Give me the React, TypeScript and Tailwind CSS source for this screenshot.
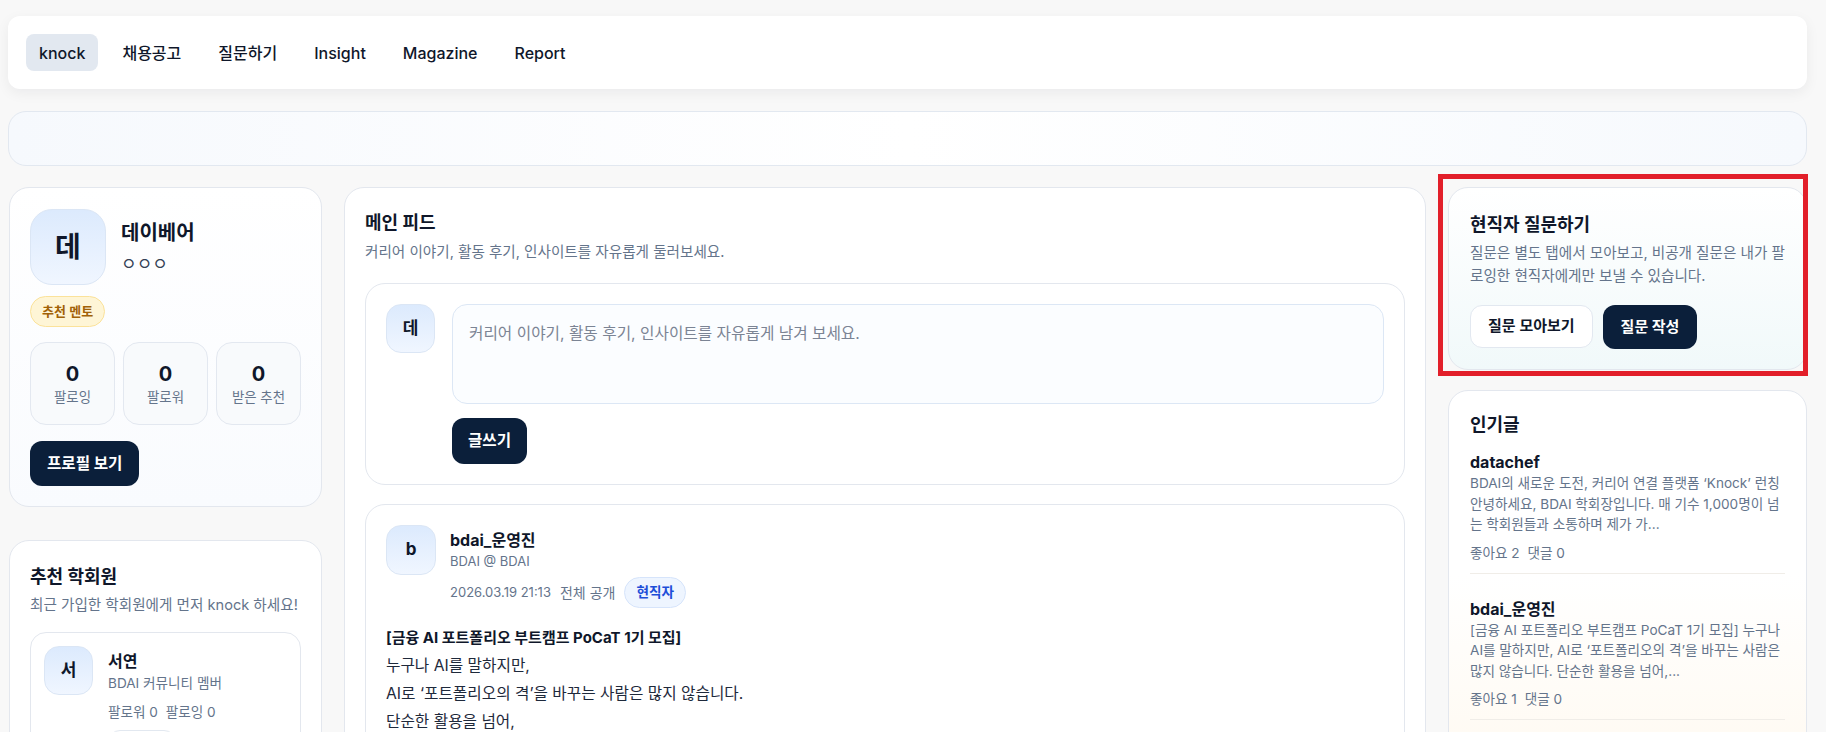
import React from 'react';

const navItems = ['knock', '채용공고', '질문하기', 'Insight', 'Magazine', 'Report'];

const popular = [
  {
    author: 'datachef',
    excerpt:
      'BDAI의 새로운 도전, 커리어 연결 플랫폼 ‘Knock’ 런칭 안녕하세요, BDAI 학회장입니다. 매 기수 1,000명이 넘는 학회원들과 소통하며 제가 가...',
    likes: 2,
    comments: 0,
  },
  {
    author: 'bdai_운영진',
    excerpt:
      '[금융 AI 포트폴리오 부트캠프 PoCaT 1기 모집] 누구나 AI를 말하지만, AI로 ‘포트폴리오의 격’을 바꾸는 사람은 많지 않습니다. 단순한 활용을 넘어,...',
    likes: 1,
    comments: 0,
  },
];

const postLines = [
  '누구나 AI를 말하지만,',
  'AI로 ‘포트폴리오의 격’을 바꾸는 사람은 많지 않습니다.',
  '단순한 활용을 넘어,',
  '실제 금융 데이터로 나만의 포트폴리오를 완성해 보세요.',
];

const Avatar: React.FC<{ letter: string; className?: string }> = ({ letter, className = '' }) => (
  <div
    className={`flex shrink-0 items-center justify-center border border-[#dbe6f5] bg-gradient-to-b from-[#dceafd] to-[#f0f6ff] font-bold text-[#0f172a] ${className}`}
  >
    {letter}
  </div>
);

const ProfileCard = () => (
  <section className="rounded-[20px] border border-[#e3e7ee] bg-gradient-to-b from-white to-[#f9fbfe] p-[20px] pt-[21px]">
    <div className="flex items-start gap-[15px]">
      <Avatar letter="데" className="h-[76px] w-[76px] rounded-[22px] text-[28px]" />
      <div className="pt-[10px]">
        <p className="text-[20px] font-bold leading-[28px] text-[#0f172a]">데이베어</p>
        <p className="mt-[3px] text-[17px] leading-[28px] text-[#334155]">ㅇㅇㅇ</p>
      </div>
    </div>
    <span className="mt-[11px] inline-flex h-[31px] items-center rounded-full border border-[#fbe29a] bg-[#fef5d6] px-[11px] text-[13px] font-semibold text-[#a16207]">
      추천 멘토
    </span>
    <div className="mt-[15px] grid grid-cols-3 gap-[8px]">
      {[
        ['0', '팔로잉'],
        ['0', '팔로워'],
        ['0', '받은 추천'],
      ].map(([n, label]) => (
        <div
          key={label}
          className="flex h-[83px] flex-col items-center justify-center rounded-2xl border border-[#e3e8f0] bg-[#f8fafc]"
        >
          <span className="text-[20px] font-bold leading-[26px] text-[#0f172a]">{n}</span>
          <span className="text-[13.4px] leading-[20px] text-[#64748b]">{label}</span>
        </div>
      ))}
    </div>
    <button className="mt-[16px] h-[45px] rounded-xl bg-[#0b1f3a] px-[17px] text-[15.6px] font-bold text-white">
      프로필 보기
    </button>
  </section>
);

const RecommendCard = () => (
  <section className="mt-[33px] rounded-[20px] border border-[#e3e7ee] bg-white p-[20px] pt-[23px]">
    <h3 className="text-[18px] font-bold leading-[26px] text-[#0f172a]">추천 학회원</h3>
    <p className="mt-[4px] text-[14.6px] leading-[22px] text-[#64748b]">최근 가입한 학회원에게 먼저 knock 하세요!</p>
    <div className="mt-[16px] rounded-2xl border border-[#e3e7ee] bg-white p-[13px]">
      <div className="flex items-start gap-[15px]">
        <Avatar letter="서" className="h-[49px] w-[49px] rounded-[15px] text-[17px]" />
        <div className="pt-[3px]">
          <p className="text-[16px] font-bold leading-[24px] text-[#0f172a]">서연</p>
          <p className="text-[13.6px] leading-[20px] text-[#64748b]">BDAI 커뮤니티 멤버</p>
          <p className="mt-[9px] text-[13.6px] leading-[20px] text-[#64748b]">
            팔로워 0 <span className="ml-[4px]">팔로잉 0</span>
          </p>
          <button className="mt-[8px] h-[36px] rounded-xl border border-[#e2e8f0] bg-white px-[14px] text-[13px] font-semibold text-[#0f172a]">
            knock
          </button>
        </div>
      </div>
    </div>
  </section>
);

const Composer = () => (
  <div className="mt-[20px] rounded-[20px] border border-[#e3e7ee] bg-white p-[20px]">
    <div className="flex items-start gap-[17px]">
      <Avatar letter="데" className="h-[49px] w-[49px] rounded-[15px] text-[17px]" />
      <div className="flex-1">
        <div className="h-[100px] rounded-[15px] border border-[#dce7f5] bg-[#fbfdff] px-[16px] pt-[17px] text-[15.7px] leading-[24px] text-[#7b8494]">
          커리어 이야기, 활동 후기, 인사이트를 자유롭게 남겨 보세요.
        </div>
        <button className="mt-[14px] h-[46px] rounded-xl bg-[#0b1f3a] px-[16px] text-[15.6px] font-bold text-white">
          글쓰기
        </button>
      </div>
    </div>
  </div>
);

const PostCard = () => (
  <article className="mt-[19px] rounded-[20px] border border-[#e3e7ee] bg-white p-[20px]">
    <div className="flex items-start gap-[14px]">
      <Avatar letter="b" className="h-[50px] w-[50px] rounded-[15px] text-[17px]" />
      <div className="pt-[4px]">
        <p className="text-[16px] font-bold leading-[22px] text-[#0f172a]">bdai_운영진</p>
        <p className="text-[13px] leading-[20px] text-[#64748b]">BDAI @ BDAI</p>
        <div className="mt-[6px] flex items-center gap-[9px] text-[13px] text-[#64748b]">
          <span>2026.03.19 21:13</span>
          <span className="text-[14px]">전체 공개</span>
          <span className="inline-flex h-[31px] items-center rounded-full border border-[#d6e4fb] bg-[#eef5ff] px-[11px] text-[13.6px] font-semibold text-[#1d4ed8]">
            현직자
          </span>
        </div>
      </div>
    </div>
    <div className="mt-[16px] text-[15.7px] leading-[28px] text-[#1e293b]">
      <p className="text-[15px] font-bold text-[#0f172a]">[금융 AI 포트폴리오 부트캠프 PoCaT 1기 모집]</p>
      {postLines.map((l) => (
        <p key={l}>{l}</p>
      ))}
    </div>
  </article>
);

const QuestionCard = () => (
  <div className="relative">
    <section className="rounded-[20px] border border-[#e3e7ee] bg-gradient-to-b from-white to-[#f1f9fa] p-[21px] pb-[20px] pt-[23px]">
      <h3 className="text-[18px] font-bold leading-[28px] text-[#0f172a]">현직자 질문하기</h3>
      <p className="mt-[3px] text-[14.6px] leading-[23px] text-[#64748b]">
        질문은 별도 탭에서 모아보고, 비공개 질문은 내가 팔로잉한 현직자에게만 보낼 수 있습니다.
      </p>
      <div className="mt-[17px] flex gap-[10px]">
        <button className="h-[43px] rounded-xl border border-[#e2e8f0] bg-white px-[17px] text-[15px] font-semibold text-[#0f172a]">
          질문 모아보기
        </button>
        <button className="h-[44px] rounded-xl bg-[#0b1f3a] px-[18px] text-[15px] font-bold text-white">
          질문 작성
        </button>
      </div>
    </section>
    <div className="pointer-events-none absolute bottom-[-6px] left-[-10px] right-[-1px] top-[-13px] border-[5px] border-[#e21f2a]" />
  </div>
);

const PopularCard = () => (
  <section className="mt-[20px] rounded-[20px] border border-[#e3e7ee] bg-gradient-to-b from-white via-white to-[#fffaf2] px-[21px] pb-[40px] pt-[20px]">
    <h3 className="text-[18px] font-bold leading-[28px] text-[#0f172a]">인기글</h3>
    <div className="flex flex-col gap-[12px]">
      {popular.map((p) => (
        <div key={p.author} className="border-b border-[#f0ede8] pb-[10px] pt-[12px]">
          <p className="text-[16px] font-bold leading-[22px] text-[#0f172a]">{p.author}</p>
          <p className="text-[13.6px] leading-[20.5px] text-[#64748b]">{p.excerpt}</p>
          <p className="mt-[8px] text-[13.6px] leading-[20px] text-[#64748b]">
            좋아요 {p.likes} <span className="ml-[4px]">댓글 {p.comments}</span>
          </p>
        </div>
      ))}
    </div>
  </section>
);

export default function App() {
  return (
    <div className="min-h-screen overflow-hidden bg-[#f8f8f8] pl-[8px] pr-[19px] pt-[16px] font-['Inter','Noto_Sans_CJK_KR',sans-serif] text-[#0f172a]">
      <nav className="flex h-[73px] items-center gap-[11px] rounded-xl bg-white px-[18px] shadow-[0_4px_14px_rgba(15,23,42,0.06)]">
        {navItems.map((item, i) => (
          <a
            key={item}
            className={`flex h-[37px] items-center rounded-lg px-[13px] text-[16px] font-medium text-[#0f172a] ${
              i === 0 ? 'bg-[#e2e8f0]' : ''
            }`}
          >
            {item}
          </a>
        ))}
      </nav>

      <div className="mt-[22px] h-[55px] rounded-[18px] border border-[#e2e8f0] bg-gradient-to-r from-[#f6f9fd] via-white to-[#f6f9fd]" />

      <div className="mt-[21px] grid grid-cols-[313px_1fr_359px] items-start gap-[22px] pl-[1px]">
        <aside>
          <ProfileCard />
          <RecommendCard />
        </aside>

        <main className="rounded-[20px] border border-[#e3e7ee] bg-white p-[20px] pt-[21px]">
          <h2 className="text-[18px] font-bold leading-[28px] text-[#0f172a]">메인 피드</h2>
          <p className="mt-[4px] text-[14.6px] leading-[22px] text-[#64748b]">
            커리어 이야기, 활동 후기, 인사이트를 자유롭게 둘러보세요.
          </p>
          <Composer />
          <PostCard />
        </main>

        <aside>
          <QuestionCard />
          <PopularCard />
        </aside>
      </div>
    </div>
  );
}
